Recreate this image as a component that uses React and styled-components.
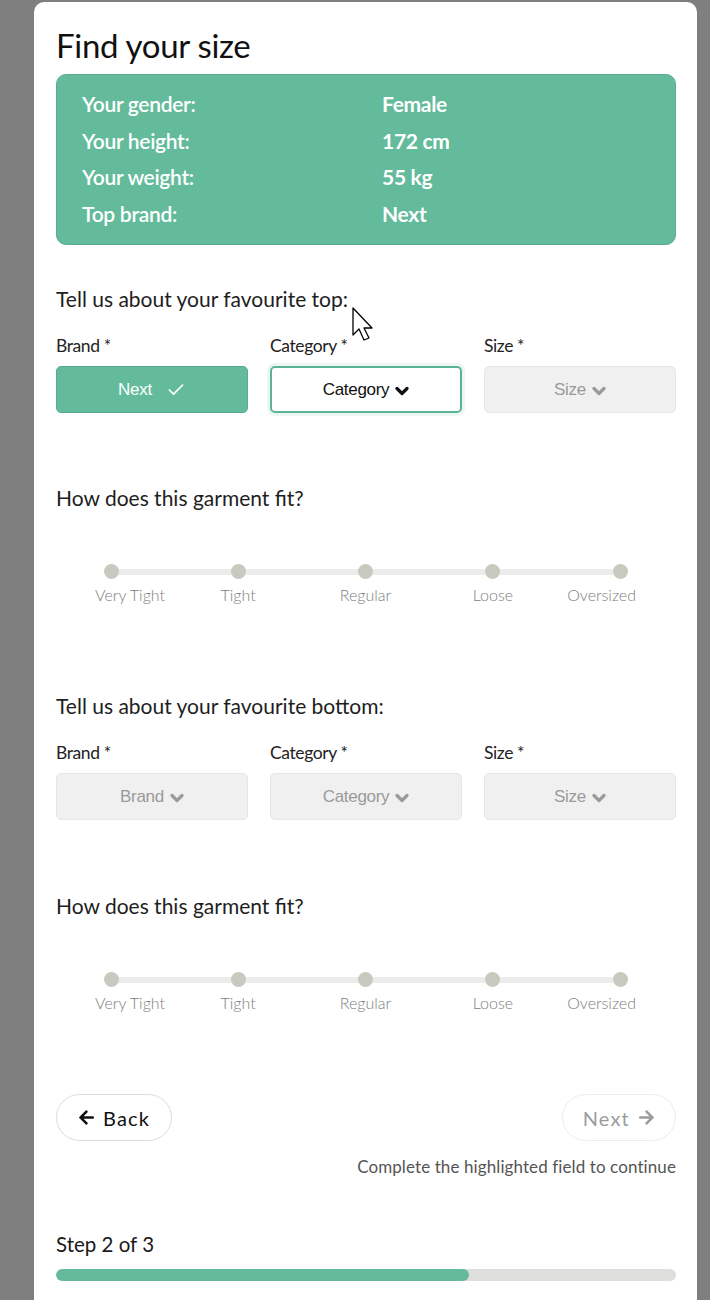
import React from 'react';
import styled, { createGlobalStyle } from 'styled-components';
import { FaArrowLeft, FaArrowRight } from 'react-icons/fa';
import { Check } from 'lucide-react';

const GlobalStyle = createGlobalStyle`
  body {
    margin: 0;
    background: #7f7f7f;
    font-family: Lato, "Noto Sans", sans-serif;
  }
`

const Backdrop = styled.div`
  position: relative;
  height: 1300px;
  overflow: hidden;
  padding-top: 2px;
  box-sizing: border-box;
`

const Card = styled.div`
  margin-left: 34px;
  width: 663px;
  min-height: 1320px;
  background: #fff;
  border-radius: 10px;
  padding: 24px 21px 0 22px;
  box-sizing: border-box;
  color: #1e1e1e;
`

const Title = styled.h1`
  margin: 0;
  font-size: 33px;
  line-height: 38px;
  font-weight: 400;
  color: #111;
  letter-spacing: -0.3px;
`

const Summary = styled.div`
  margin-top: 10px;
  background: #63bb9b;
  border: 1px solid #58ad8e;
  border-radius: 10px;
  padding: 11px 25px 12px;
  display: grid;
  grid-template-columns: 300px 1fr;
  color: #fff;
  font-size: 21px;
  line-height: 36.5px;
  letter-spacing: -0.3px;
`

const SummaryLabel = styled.div`
  font-weight: 600;
`

const SummaryValue = styled.div`
  font-weight: 700;
`

const Heading = styled.h2`
  margin: ${p => p.$top}px 0 0;
  font-size: 21px;
  line-height: 24px;
  font-weight: 400;
  color: #1e1e1e;
`

const Fields = styled.div`
  margin-top: 25px;
  display: grid;
  grid-template-columns: repeat(3, 1fr);
  column-gap: 22px;
`

const Field = styled.div`
  display: flex;
  flex-direction: column;
  gap: 10px;
`

const FieldLabel = styled.label`
  font-size: 17.5px;
  line-height: 20px;
  color: #222;
  letter-spacing: -0.4px;
`

const Select = styled.div`
  height: 47px;
  box-sizing: border-box;
  border-radius: 5px;
  display: flex;
  align-items: center;
  justify-content: center;
  gap: 6px;
  font-family: "Liberation Sans", Arial, sans-serif;
  font-size: 17px;
  letter-spacing: -0.3px;
  ${p => p.$state === 'done' && `
    background: #63bb9b;
    border: 1px solid #58ad8e;
    color: #fff;
    gap: 14px;
  `}
  ${p => p.$state === 'active' && `
    background: #fff;
    border: 2px solid #5cb496;
    box-shadow: 0 0 0 3px rgba(99, 187, 155, 0.12);
    color: #111;
  `}
  ${p => p.$state === 'off' && `
    background: #f0f0f0;
    border: 1px solid #e6e6e6;
    color: #9a9a9a;
  `}
`

const Chevron = styled.svg`
  margin-top: 2px;
`

const Slider = styled.div`
  margin-top: 54px;
  padding: 0 48px 0 47px;
`

const Track = styled.div`
  position: relative;
  margin: 0 8px;
  height: 15px;
  display: flex;
  justify-content: space-between;
  align-items: center;
  &::before {
    content: '';
    position: absolute;
    left: 0;
    right: 0;
    top: 5px;
    height: 6px;
    background: #ececec;
    border-radius: 3px;
  }
`

const Dot = styled.span`
  position: relative;
  width: 15px;
  height: 15px;
  margin: 0 -7.5px;
  border-radius: 50%;
  background: #c9c9bf;
`

const Ticks = styled.div`
  margin-top: 7px;
  display: grid;
  grid-template-columns: repeat(5, 1fr);
  margin-left: -56px;
  margin-right: -56px;
`

const Tick = styled.span`
  font-size: 16px;
  line-height: 18px;
  font-weight: 300;
  color: #7d7d7d;
  text-align: center;
  white-space: nowrap;
  ${p => p.$edge === 'first' && `text-align: left; padding-left: 48px;`}
  ${p => p.$edge === 'last' && `text-align: right; padding-right: 48px;`}
`

const Nav = styled.div`
  margin-top: 82px;
  display: flex;
  justify-content: space-between;
`

const NavButton = styled.button`
  height: 47px;
  padding: 0 ${p => (p.disabled ? 20 : 21)}px;
  border-radius: 24px;
  background: #fff;
  border: 1px solid ${p => (p.disabled ? '#ececec' : '#dcdcdc')};
  color: ${p => (p.disabled ? '#9c9c9c' : '#111')};
  font-family: Lato, sans-serif;
  font-size: 20px;
  letter-spacing: 1.2px;
  display: flex;
  align-items: center;
  gap: 8px;
  svg {
    font-size: 17px;
  }
`

const Hint = styled.p`
  margin: 16px 0 0;
  text-align: right;
  font-size: 17px;
  line-height: 20px;
  color: #555;
  letter-spacing: 0.1px;
`

const Step = styled.div`
  margin-top: 55px;
  font-size: 20.5px;
  line-height: 24px;
  color: #1a1a1a;
`

const Progress = styled.div`
  margin-top: 13px;
  height: 12px;
  border-radius: 6px;
  background: #dededc;
  overflow: hidden;
`

const ProgressFill = styled.div`
  height: 100%;
  background: #63bb9b;
  border-radius: 6px;
`

const Pointer = styled.svg`
  position: absolute;
  left: 352px;
  top: 307px;
`

const fits = ['Very Tight', 'Tight', 'Regular', 'Loose', 'Oversized']

const summary = [
  ['Your gender:', 'Female'],
  ['Your height:', '172 cm'],
  ['Your weight:', '55 kg'],
  ['Top brand:', 'Next'],
]

function FitSlider() {
  return (
    <Slider>
      <Track>
        {fits.map(f => <Dot key={f} />)}
      </Track>
      <Ticks>
        {fits.map((f, i) => (
          <Tick key={f} $edge={i === 0 ? 'first' : i === fits.length - 1 ? 'last' : undefined}>{f}</Tick>
        ))}
      </Ticks>
    </Slider>
  )
}

function Dropdown({ label, value, state }) {
  return (
    <Field>
      <FieldLabel>{label} *</FieldLabel>
      <Select $state={state}>
        {value}
        {state === 'done'
          ? <Check size={20} strokeWidth={2} />
          : (
            <Chevron width="14" height="10" viewBox="0 0 14 10">
              <path d="M2 2.5 L7 7.5 L12 2.5" fill="none" stroke="currentColor" strokeWidth="3.2" strokeLinecap="round" strokeLinejoin="round" />
            </Chevron>
          )}
      </Select>
    </Field>
  )
}

export default function App() {
  const step = 2
  const total = 3
  return (
    <>
      <GlobalStyle />
      <Backdrop>
        <Card>
          <Title>Find your size</Title>
          <Summary>
            {summary.map(([k, v]) => (
              <React.Fragment key={k}>
                <SummaryLabel>{k}</SummaryLabel>
                <SummaryValue>{v}</SummaryValue>
              </React.Fragment>
            ))}
          </Summary>

          <Heading $top={42}>Tell us about your favourite top:</Heading>
          <Fields>
            <Dropdown label="Brand" value="Next" state="done" />
            <Dropdown label="Category" value="Category" state="active" />
            <Dropdown label="Size" value="Size" state="off" />
          </Fields>
          <Heading $top={73}>How does this garment fit?</Heading>
          <FitSlider />

          <Heading $top={90}>Tell us about your favourite bottom:</Heading>
          <Fields>
            <Dropdown label="Brand" value="Brand" state="off" />
            <Dropdown label="Category" value="Category" state="off" />
            <Dropdown label="Size" value="Size" state="off" />
          </Fields>
          <Heading $top={74}>How does this garment fit?</Heading>
          <FitSlider />

          <Nav>
            <NavButton><FaArrowLeft /> Back</NavButton>
            <NavButton disabled>Next <FaArrowRight /></NavButton>
          </Nav>
          <Hint>Complete the highlighted field to continue</Hint>

          <Step>Step {step} of {total}</Step>
          <Progress>
            <ProgressFill style={{ width: `${(step / total) * 100}%` }} />
          </Progress>
        </Card>

        <Pointer width="26" height="40" viewBox="0 0 26 40">
          <path d="M1 1 L1 28 L7 22 L12 33 L17 31 L12 21 L20 21 Z" fill="#fff" stroke="#000" strokeWidth="1.3" strokeLinejoin="round" />
        </Pointer>
      </Backdrop>
    </>
  )
}
